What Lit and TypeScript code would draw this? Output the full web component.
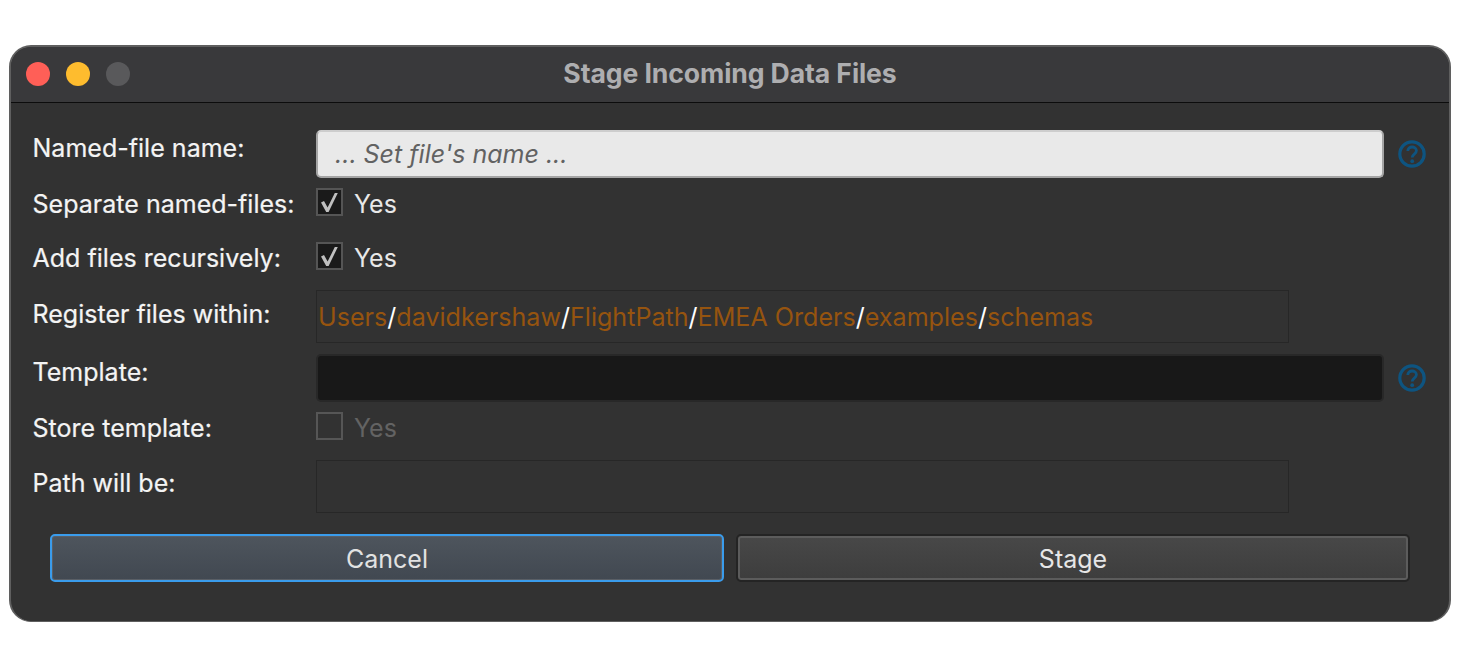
import { LitElement, html, css } from "lit";
import { customElement } from "lit/decorators.js";

const help = html`<svg class="help" viewBox="0 0 28 28" aria-hidden="true">
  <circle cx="14" cy="14" r="12.2" fill="none" stroke="#0e5480" stroke-width="3.2"></circle>
  <path d="M9.8 11c0-2.5 1.9-4 4.3-4s4.3 1.5 4.3 3.7c0 3.4-4.2 3.3-4.2 6.7" fill="none" stroke="#0e5480" stroke-width="2.8"></path>
  <circle cx="14.2" cy="21.2" r="1.9" fill="#0e5480"></circle>
</svg>`;

const check = html`<svg class="tick" viewBox="0 0 27 28" aria-hidden="true">
  <path d="M5 14.4l3-1.4 3.6 6.6L18.8 5h3L12.6 24h-2.4z" fill="#bfbfbf"></path>
</svg>`;

const segments = ["Users", "davidkershaw", "FlightPath", "EMEA Orders", "examples", "schemas"];

@customElement("app-root")
export class AppRoot extends LitElement {
  static styles = css`
    :host {
      display: block;
      width: 1459px;
      height: 651px;
      background: #fff;
      font-family: Inter, "Liberation Sans", sans-serif;
      overflow: hidden;
    }
    .page {
      padding: 45px 8px 0 9px;
      box-sizing: border-box;
      height: 651px;
    }
    .window {
      box-sizing: border-box;
      height: 577px;
      border-radius: 22px;
      border: 2px solid #5f5f5f;
      border-bottom-width: 1px;
      background: #323232;
      overflow: hidden;
      display: flex;
      flex-direction: column;
    }
    .titlebar {
      height: 55px;
      flex: none;
      background: #39393b;
      border-bottom: 1px solid #0c0c0c;
      display: flex;
      align-items: center;
      justify-content: center;
      position: relative;
    }
    .lights {
      position: absolute;
      left: 15px;
      top: 15px;
      display: flex;
      gap: 16px;
    }
    .light {
      width: 24px;
      height: 24px;
      border-radius: 50%;
    }
    .red { background: #ff5f57; }
    .yellow { background: #febc2e; }
    .gray { background: #59595b; }
    .title {
      font-size: 26.6px;
      font-weight: 700;
      color: #aeaeb0;
      letter-spacing: -0.1px;
      margin-bottom: 3px;
    }
    .body {
      padding: 27px 0 0 0;
      display: flex;
      flex-direction: column;
    }
    .row {
      display: grid;
      grid-template-columns: 305px 1068px 1fr;
    }
    .h-input { height: 48px; }
    .h-check { height: 28px; }
    .h-path { height: 53px; }
    .label {
      font-size: 25px;
      color: #f4f4f4;
      padding-left: 21.5px;
      line-height: 30px;
      white-space: nowrap;
      letter-spacing: 0.02px;
      -webkit-text-stroke: 0.2px #f4f4f4;
    }
    .input {
      height: 48px;
      box-sizing: border-box;
      border-radius: 5px;
    }
    .light-input {
      background: #e9e9e9;
      border: 2px solid #a5a5a5;
      border-top-color: #cdcdcd;
      color: #626262;
      font-style: italic;
      font-size: 25px;
      line-height: 44px;
      padding-left: 17px;
    }
    .dark-input {
      background: #181818;
      border: 2px solid #282828;
    }
    .help {
      width: 28px;
      height: 28px;
      margin: 10px 0 0 14px;
      display: block;
    }
    .checkwrap {
      display: flex;
      align-items: flex-start;
      gap: 11px;
    }
    .box {
      width: 27px;
      height: 28px;
      box-sizing: border-box;
      border: 2px solid #555;
      background: #1a1a1a;
      position: relative;
      flex: none;
    }
    .box.off {
      background: transparent;
      border-color: #565656;
    }
    .tick {
      position: absolute;
      left: -2px;
      top: -2px;
      width: 27px;
      height: 28px;
    }
    .yes {
      font-size: 25px;
      line-height: 30px;
      padding-top: 1px;
      color: #e8e8e8;
    }
    .yes.off { color: #636363; }
    .pathbox {
      box-sizing: border-box;
      width: 973px;
      height: 53px;
      border: 1px solid #272727;
      background: #323232;
      font-size: 25.1px;
      line-height: 53px;
      padding-left: 1px;
      color: #96540f;
      white-space: nowrap;
    }
    .slash { color: #fff; }
    .r2 { margin-top: 10px; }
    .r3 { margin-top: 26px; }
    .r4 { margin-top: 20px; }
    .r5 { margin-top: 11px; }
    .r6 { margin-top: 10px; }
    .r7 { margin-top: 20px; }
    .l1 { padding-top: 3px; }
    .l2 { padding-top: 1px; }
    .l4 { padding-top: 9px; }
    .l5 { padding-top: 3px; }
    .l7 { padding-top: 8px; }
    .buttons {
      display: flex;
      gap: 12px;
      padding: 21px 0 0 39px;
    }
    .btn {
      box-sizing: border-box;
      height: 48px;
      border-radius: 5px;
      font-family: inherit;
      font-size: 25px;
      padding: 2px 0 0;
    }
    .cancel {
      width: 674px;
      color: #e2e2e2;
      background: linear-gradient(#4e555d, #414851);
      border: 2px solid #3a9cec;
      box-shadow: inset 0 0 0 1px #5a5f66;
    }
    .stage {
      width: 674px;
      color: #e6e6e6;
      background: linear-gradient(#484848, #3d3d3d);
      border: 2px solid #242424;
      box-shadow: inset 0 0 0 2px #5c5c5c;
    }
  `;

  render() {
    return html`<div class="page">
      <div class="window">
        <div class="titlebar">
          <div class="lights">
            <div class="light red"></div>
            <div class="light yellow"></div>
            <div class="light gray"></div>
          </div>
          <div class="title">Stage Incoming Data Files</div>
        </div>
        <div class="body">
          <div class="row h-input">
            <div class="label l1">Named-file name:</div>
            <div class="input light-input">... Set file's name ...</div>
            ${help}
          </div>
          <div class="row h-check r2">
            <div class="label l2">Separate named-files:</div>
            <div class="checkwrap"><div class="box">${check}</div><div class="yes">Yes</div></div>
          </div>
          <div class="row h-check r3">
            <div class="label l2">Add files recursively:</div>
            <div class="checkwrap"><div class="box">${check}</div><div class="yes">Yes</div></div>
          </div>
          <div class="row h-path r4">
            <div class="label l4">Register files within:</div>
            <div class="pathbox">${segments.map(
              (s, i) => html`${i ? html`<span class="slash">/</span>` : ""}${s}`
            )}</div>
          </div>
          <div class="row h-input r5">
            <div class="label l5">Template:</div>
            <div class="input dark-input"></div>
            ${help}
          </div>
          <div class="row h-check r6">
            <div class="label l2">Store template:</div>
            <div class="checkwrap"><div class="box off"></div><div class="yes off">Yes</div></div>
          </div>
          <div class="row h-path r7">
            <div class="label l7">Path will be:</div>
            <div class="pathbox"></div>
          </div>
          <div class="buttons">
            <button class="btn cancel">Cancel</button>
            <button class="btn stage">Stage</button>
          </div>
        </div>
      </div>
    </div>`;
  }
}
